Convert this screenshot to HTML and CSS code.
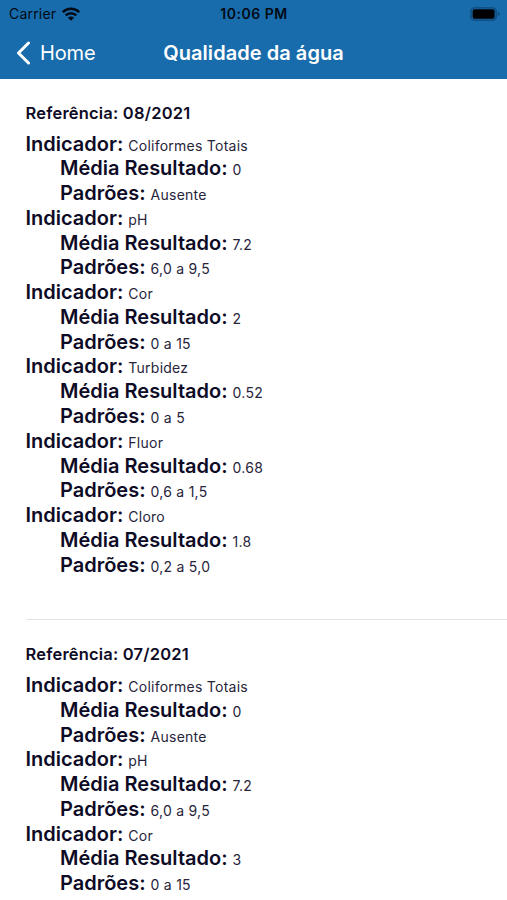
FILE: index.html
```html
<!DOCTYPE html>
<html lang="pt-BR">
<head>
<meta charset="utf-8">
<title>Qualidade da água</title>
<link rel="stylesheet" href="styles.css">
</head>
<body>
<header class="header">
  <div class="status">
    <div class="carrier"><span>Carrier</span>
      <svg class="wifi" width="18" height="14" viewBox="0 0 18 14"><g fill="none" stroke="#020a14" stroke-width="2.5"><path d="M.8 5.2a11.6 11.6 0 0 1 16.4 0"/><path d="M3.7 8.4a7.5 7.5 0 0 1 10.6 0"/></g><path d="M9 13.8 5.9 10.7a4.4 4.4 0 0 1 6.2 0z" fill="#020a14"/></svg>
    </div>
    <div class="time">10:06 PM</div>
    <svg class="battery" width="31" height="14" viewBox="0 0 31 14"><rect x="1" y=".8" width="25.2" height="12.4" rx="3.6" fill="none" stroke="#0f477a" stroke-width="1.3"/><rect x="2.6" y="2.3" width="22" height="9.4" rx="2" fill="#000"/><path d="M27.8 5q1.8.6 1.8 2t-1.8 2z" fill="#0f477a"/></svg>
  </div>
  <nav class="nav">
    <div class="back"><svg width="16" height="24" viewBox="0 0 16 24"><path d="M13.5 2 3.5 12l10 10" fill="none" stroke="#fff" stroke-width="3" stroke-linecap="round" stroke-linejoin="round"/></svg><span>Home</span></div>
    <h1 class="title">Qualidade da água</h1>
  </nav>
</header>
<main>
  <section class="report">
    <h2>Referência: 08/2021</h2>
    <div class="row"><b>Indicador:</b><span>Coliformes Totais</span></div>
    <div class="row sub"><b>Média Resultado:</b><span>0</span></div>
    <div class="row sub"><b>Padrões:</b><span>Ausente</span></div>
    <div class="row"><b>Indicador:</b><span>pH</span></div>
    <div class="row sub"><b>Média Resultado:</b><span>7.2</span></div>
    <div class="row sub"><b>Padrões:</b><span>6,0 a 9,5</span></div>
    <div class="row"><b>Indicador:</b><span>Cor</span></div>
    <div class="row sub"><b>Média Resultado:</b><span>2</span></div>
    <div class="row sub"><b>Padrões:</b><span>0 a 15</span></div>
    <div class="row"><b>Indicador:</b><span>Turbidez</span></div>
    <div class="row sub"><b>Média Resultado:</b><span>0.52</span></div>
    <div class="row sub"><b>Padrões:</b><span>0 a 5</span></div>
    <div class="row"><b>Indicador:</b><span>Fluor</span></div>
    <div class="row sub"><b>Média Resultado:</b><span>0.68</span></div>
    <div class="row sub"><b>Padrões:</b><span>0,6 a 1,5</span></div>
    <div class="row"><b>Indicador:</b><span>Cloro</span></div>
    <div class="row sub"><b>Média Resultado:</b><span>1.8</span></div>
    <div class="row sub"><b>Padrões:</b><span>0,2 a 5,0</span></div>
  </section>
  <section class="report">
    <h2>Referência: 07/2021</h2>
    <div class="row"><b>Indicador:</b><span>Coliformes Totais</span></div>
    <div class="row sub"><b>Média Resultado:</b><span>0</span></div>
    <div class="row sub"><b>Padrões:</b><span>Ausente</span></div>
    <div class="row"><b>Indicador:</b><span>pH</span></div>
    <div class="row sub"><b>Média Resultado:</b><span>7.2</span></div>
    <div class="row sub"><b>Padrões:</b><span>6,0 a 9,5</span></div>
    <div class="row"><b>Indicador:</b><span>Cor</span></div>
    <div class="row sub"><b>Média Resultado:</b><span>3</span></div>
    <div class="row sub"><b>Padrões:</b><span>0 a 15</span></div>
    <div class="row"><b>Indicador:</b><span>Turbidez</span></div>
  </section>
</main>
</body>
</html>
```
FILE: styles.css
```css
* { box-sizing: border-box; }
html {
  overflow: hidden;
}
body {
  margin: 0;
  height: 900px;
  overflow: hidden;
  background: #fff;
  color: #0e0b26;
  font-family: Inter, "Liberation Sans", sans-serif;
}
.header {
  height: 79px;
  background: #186cac;
}
.status {
  display: grid;
  grid-template-columns: 1fr auto 1fr;
  align-items: center;
  height: 27px;
  padding: 0 6px 0 9px;
  color: #020a14;
  font-size: 14px;
  line-height: 27px;
}
.carrier {
  display: flex;
  align-items: center;
  gap: 6px;
  letter-spacing: 0.2px;
}
.time {
  font-weight: 600;
  letter-spacing: 0.5px;
  margin-right: 2px;
}
.battery {
  justify-self: end;
}
.nav {
  display: grid;
  grid-template-columns: 1fr auto 1fr;
  align-items: center;
  height: 51px;
  padding: 0 15px;
  color: #fff;
}
.back {
  display: flex;
  align-items: center;
  gap: 9px;
  font-size: 20px;
  letter-spacing: -0.15px;
}
.title {
  margin: 0;
  font-size: 20px;
  font-weight: 600;
  letter-spacing: 0.05px;
}
.report {
  height: 541px;
  margin-left: 25.5px;
  padding-top: 22.6px;
  border-bottom: 1px solid #e3e3e5;
}
.report + .report {
  padding-top: 23px;
}
.report h2 {
  margin: 0 0 7px;
  font-size: 16.5px;
  line-height: 23px;
  font-weight: 600;
  letter-spacing: 0.2px;
}
.row {
  display: flex;
  align-items: baseline;
  gap: 5px;
  height: 24.78px;
  line-height: 24.78px;
}
.row b {
  font-size: 20px;
  font-weight: 600;
}
.row span {
  font-size: 14px;
  letter-spacing: 0.25px;
  color: #27243b;
}
.sub {
  padding-left: 34.5px;
}
```
